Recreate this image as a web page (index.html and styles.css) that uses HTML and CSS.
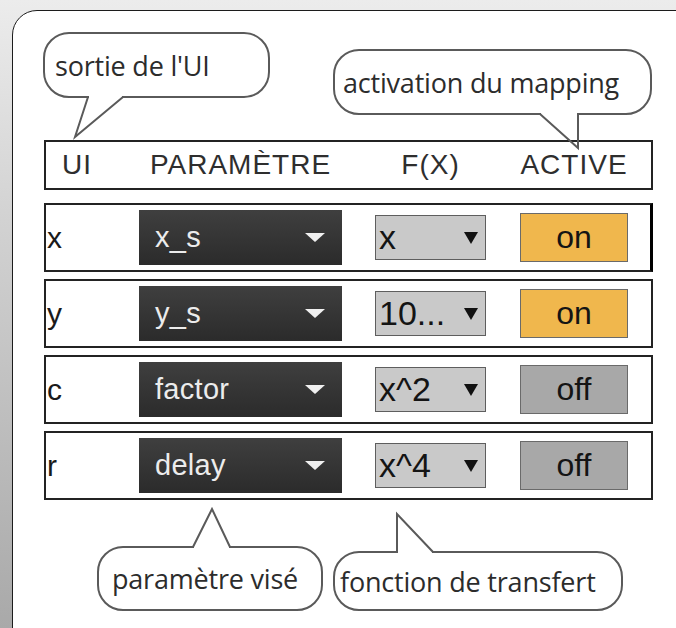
FILE: index.html
```html
<!DOCTYPE html>
<html lang="fr">
<head>
    <meta charset="UTF-8">
    <title>Mapping UI</title>
    <link rel="stylesheet" href="styles.css">
</head>
<body>

    <div class="frame">

        <!-- Callouts above the table -->
        <div class="notes notes-top">
            <div class="note note-out">
                sortie de l'UI
                <svg class="tail tail-out" width="60" height="46">
                    <rect x="19" y="1" width="33" height="5" fill="#fff"/>
                    <polyline points="18,3 5,43 53,3" fill="none" stroke="#5a5a5a" stroke-width="2"/>
                </svg>
            </div>
            <div class="note note-active">
                activation du mapping
                <svg class="tail tail-active" width="56" height="45">
                    <rect x="11" y="1" width="36" height="6" fill="#fff"/>
                    <polyline points="10,4 48,38 48,4" fill="none" stroke="#5a5a5a" stroke-width="2"/>
                </svg>
            </div>
        </div>

        <!-- Table -->
        <div class="head">
            <span class="c-ui">UI</span>
            <span class="c-param">PARAMÈTRE</span>
            <span class="c-fx">F(X)</span>
            <span class="c-toggle">ACTIVE</span>
        </div>

        <div class="row row-first">
            <span class="c-ui">x</span>
            <div class="c-param menu">x_s <span class="arrow"></span></div>
            <div class="c-fx fx">x <span class="arrow"></span></div>
            <div class="c-toggle toggle on">on</div>
        </div>
        <div class="row">
            <span class="c-ui">y</span>
            <div class="c-param menu">y_s <span class="arrow"></span></div>
            <div class="c-fx fx">10... <span class="arrow"></span></div>
            <div class="c-toggle toggle on">on</div>
        </div>
        <div class="row">
            <span class="c-ui">c</span>
            <div class="c-param menu">factor <span class="arrow"></span></div>
            <div class="c-fx fx">x^2 <span class="arrow"></span></div>
            <div class="c-toggle toggle">off</div>
        </div>
        <div class="row">
            <span class="c-ui">r</span>
            <div class="c-param menu">delay <span class="arrow"></span></div>
            <div class="c-fx fx">x^4 <span class="arrow"></span></div>
            <div class="c-toggle toggle">off</div>
        </div>

        <!-- Callouts below the table -->
        <div class="notes notes-bottom">
            <div class="note note-param">
                paramètre visé
                <svg class="tail tail-param" width="55" height="47">
                    <rect x="9" y="40" width="35" height="6" fill="#fff"/>
                    <polyline points="8,43 27,5 45,43" fill="none" stroke="#5a5a5a" stroke-width="2"/>
                </svg>
            </div>
            <div class="note note-fx">
                fonction de transfert
                <svg class="tail tail-fx" width="50" height="47">
                    <rect x="8" y="40" width="34" height="6" fill="#fff"/>
                    <polyline points="7,43 7,5 43,43" fill="none" stroke="#5a5a5a" stroke-width="2"/>
                </svg>
            </div>
        </div>

    </div>

</body>
</html>
```

FILE: styles.css
```css
body {
    margin: 0;
    height: 628px;
    overflow: hidden;
    background: linear-gradient(180deg, #ececec 0%, #d2d2d2 35%, #a9a9a9 100%);
    font-family: "Liberation Sans", Arial, sans-serif;
}
.frame {
    box-sizing: border-box;
    width: 720px;
    height: 660px;
    margin: 10px 0 0 12px;
    padding-left: 31px;
    background: #fff;
    border: 1px solid #1c1c1c;
    border-radius: 25px;
}

/* callouts */
.notes {
    display: flex;
    align-items: flex-start;
    width: 609px;
}
.notes-top {
    height: 129px;
}
.note {
    position: relative;
    box-sizing: border-box;
    display: flex;
    align-items: center;
    height: 66px;
    border: 2px solid #5a5a5a;
    border-radius: 26px;
    font-family: "Open Sans", sans-serif;
    font-size: 27px;
    color: #2c2c2c;
    white-space: nowrap;
    letter-spacing: -0.2px;
}
.note-out {
    width: 227px;
    margin: 21px 0 0 -1px;
    padding-left: 10px;
}
.note-active {
    width: 319px;
    margin: 38px 0 0 63px;
    padding-left: 8px;
}
.note-param {
    width: 226px;
    height: 65px;
    margin: 46px 0 0 53px;
    padding-left: 13px;
}
.note-fx {
    width: 290px;
    height: 60px;
    margin: 51px 0 0 10px;
    padding-left: 5px;
}
.tail {
    position: absolute;
}
.tail-out {
    left: 25px;
    top: 60px;
}
.tail-active {
    left: 195px;
    top: 59px;
}
.tail-param {
    left: 86px;
    top: -44px;
}
.tail-fx {
    left: 55px;
    top: -44px;
}

/* table */
.head,
.row {
    box-sizing: border-box;
    display: flex;
    align-items: center;
    width: 609px;
    border: 2px solid #232323;
    font-size: 28px;
}
.head {
    height: 50px;
    color: #2e2e2e;
    letter-spacing: 1px;
}
.row {
    height: 69px;
    margin-top: 7px;
    color: #1a1a1a;
}
.row-first {
    margin-top: 13px;
    border-right: 3px solid #000;
}
.c-ui {
    width: 93px;
}
.c-param {
    width: 203px;
}
.c-fx {
    width: 111px;
    margin-left: 33px;
}
.c-toggle {
    width: 108px;
    margin-left: 34px;
}
.head span {
    text-align: center;
}
.head .c-ui {
    text-align: left;
    padding-left: 16px;
    width: 77px;
}
.row .c-ui {
    padding-left: 1px;
    width: 92px;
    font-size: 30px;
}

.menu {
    box-sizing: border-box;
    display: flex;
    align-items: center;
    justify-content: space-between;
    height: 55px;
    padding: 0 17px 0 16px;
    background: linear-gradient(180deg, #3f3f3f, #2b2b2b);
    color: #ececec;
    font-size: 29px;
    letter-spacing: 0.3px;
}
.menu .arrow {
    border-left: 10px solid transparent;
    border-right: 10px solid transparent;
    border-top: 9px solid #f0f0f0;
}
.fx {
    box-sizing: border-box;
    display: flex;
    align-items: center;
    justify-content: space-between;
    height: 45px;
    padding: 0 7px 0 3px;
    background: #c9c9c9;
    border: 1.5px solid #5e5e5e;
    color: #141414;
    font-size: 34px;
}
.fx .arrow {
    border-left: 7px solid transparent;
    border-right: 7px solid transparent;
    border-top: 12px solid #111;
}
.toggle {
    box-sizing: border-box;
    height: 49px;
    line-height: 46px;
    text-align: center;
    background: #a8a8a8;
    border: 1.5px solid #6a6a6a;
    color: #141414;
    font-size: 32px;
}
.toggle.on {
    background: #f0b74d;
}
```
